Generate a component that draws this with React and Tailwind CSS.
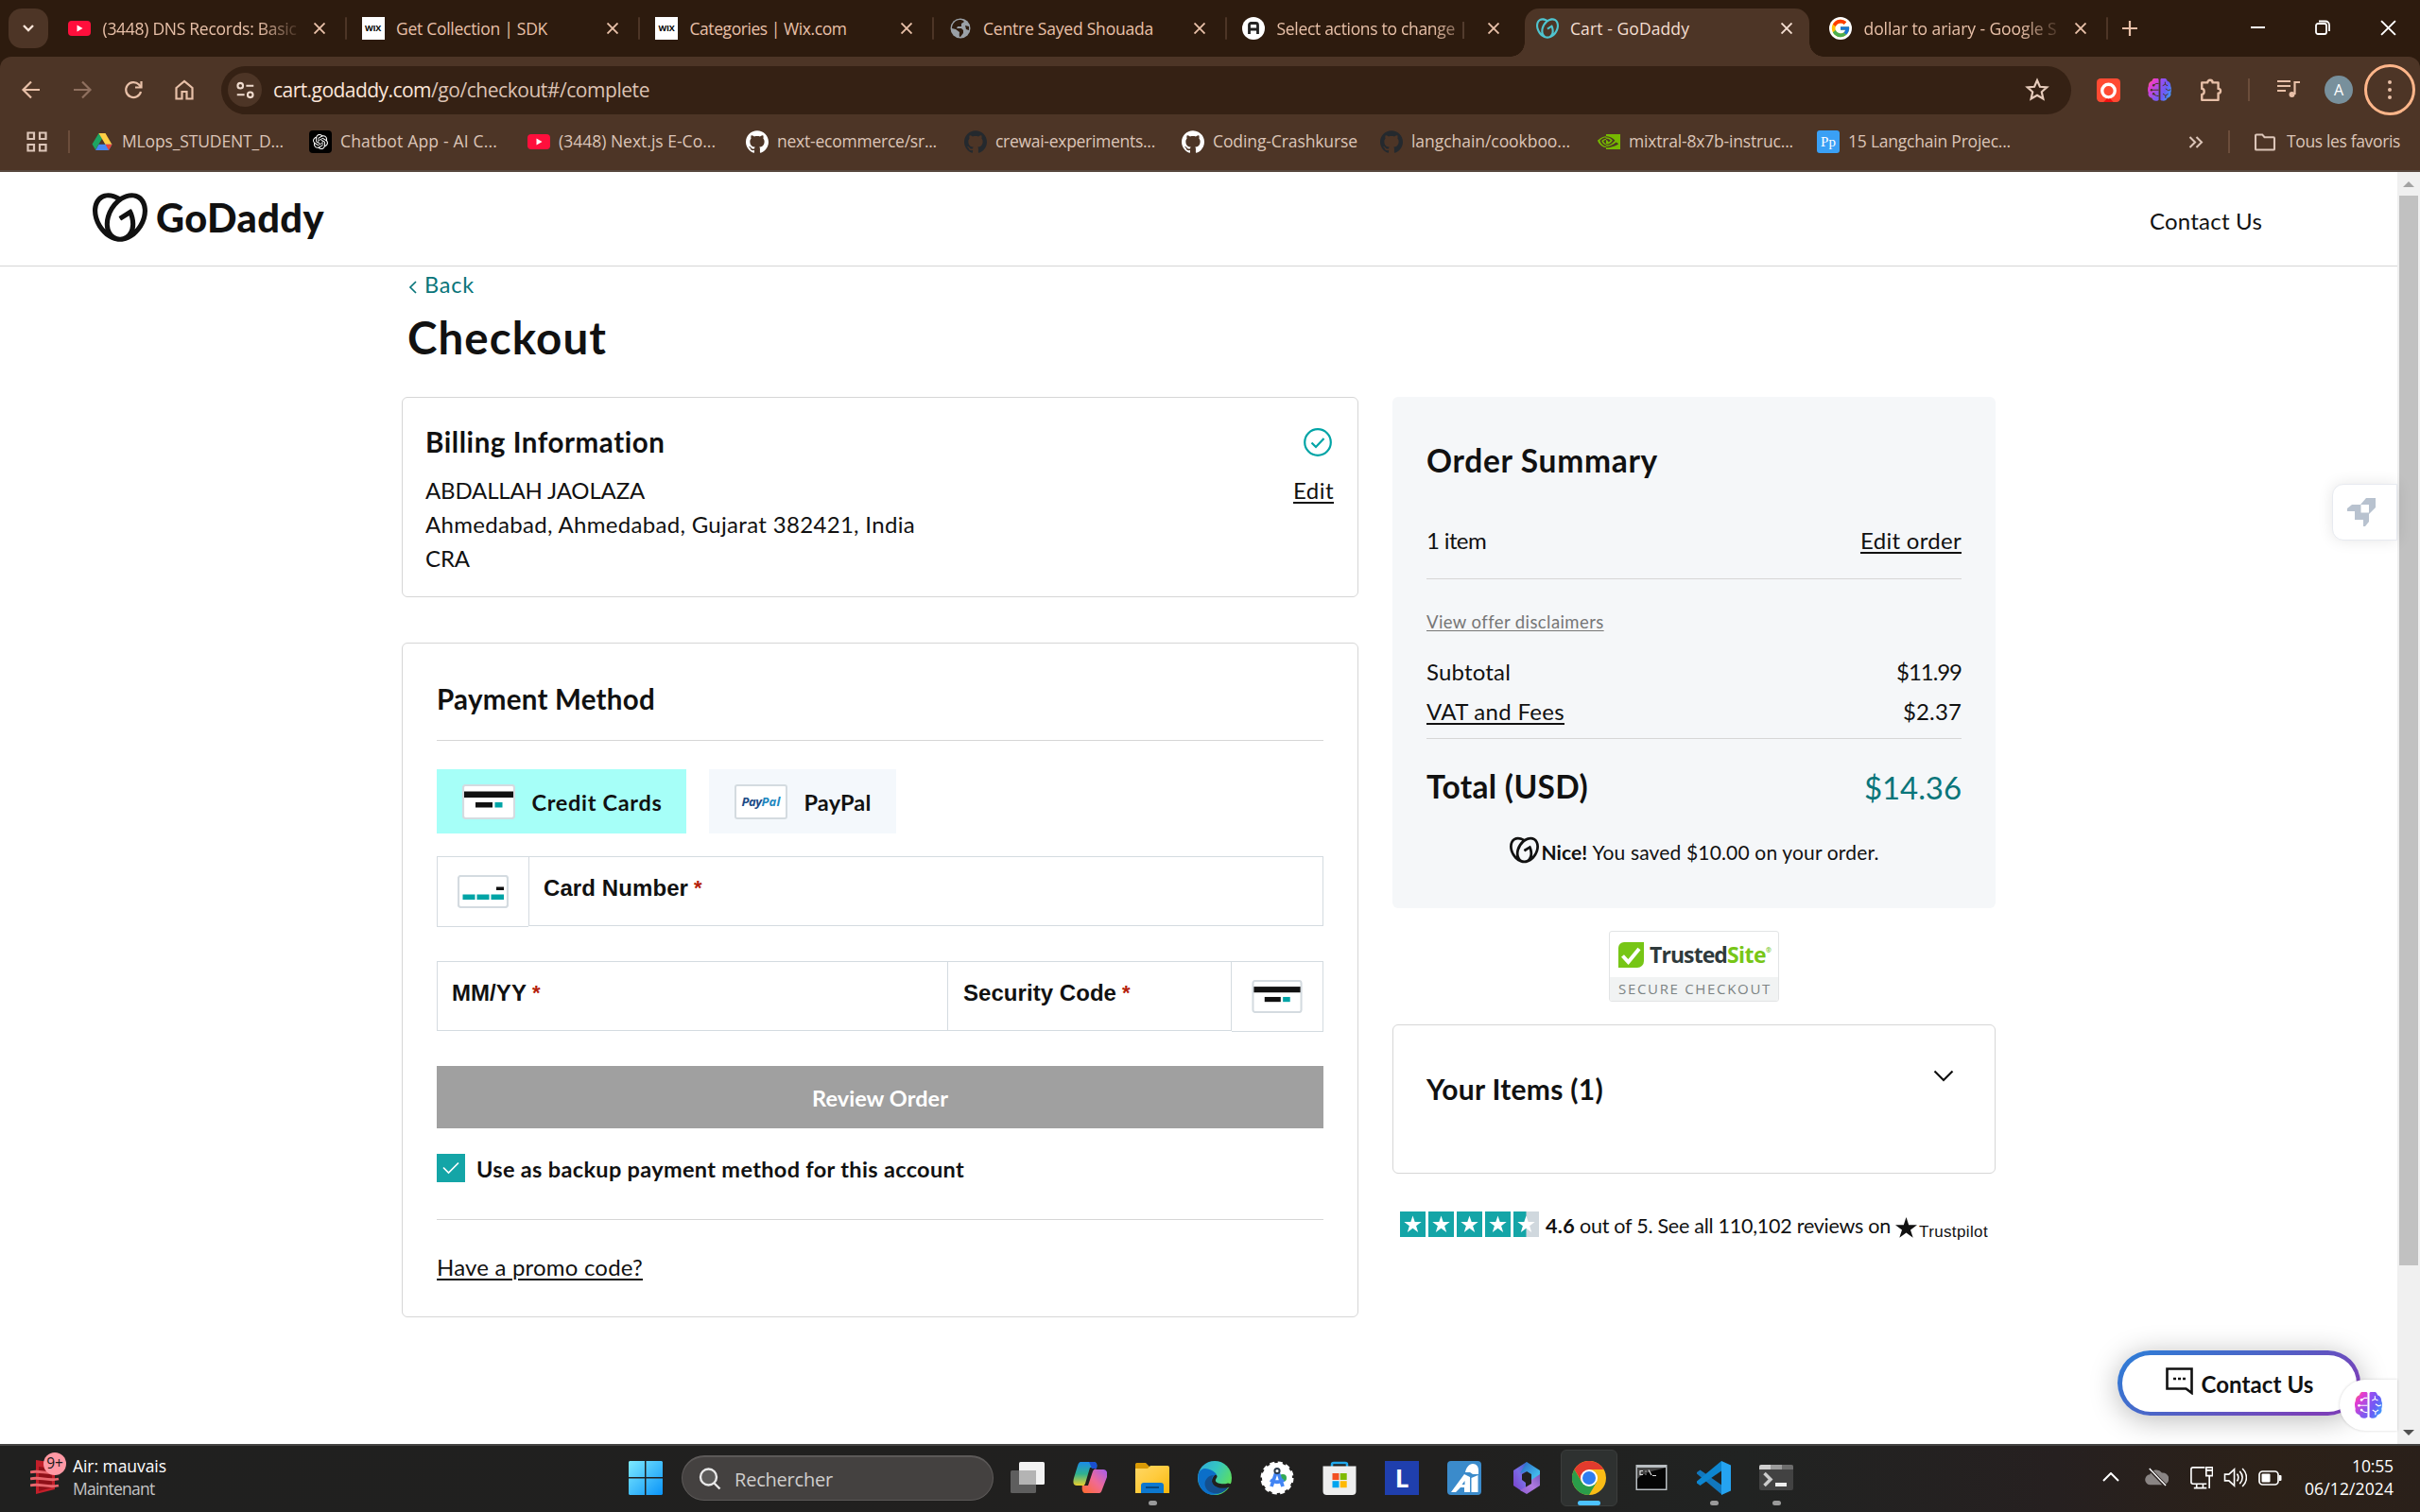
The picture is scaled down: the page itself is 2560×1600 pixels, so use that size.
import React, { useLayoutEffect, useRef, useState } from "react";
import { SiGodaddy, SiGithub, SiNvidia, SiOpenai } from "react-icons/si";
import { FcGoogle } from "react-icons/fc";

// Single line of text whose tracking is adjusted so that it spans `w` pixels.
function Fit({ w, className = "", children }) {
  const ref = useRef(null);
  const [spacing, setSpacing] = useState(0);
  useLayoutEffect(() => {
    const natural = ref.current.getBoundingClientRect().width;
    setSpacing((w - natural) / String(children).length);
  }, []);
  return (
    <span
      ref={ref}
      className={"inline-block shrink-0 whitespace-pre leading-none " + className}
      style={{ letterSpacing: spacing + "px" }}
    >
      {children}
    </span>
  );
}

const UI = "font-['Open_Sans',sans-serif]";

function YouTube() {
  return (
    <svg viewBox="0 0 24 24" className="size-6">
      <rect x="0" y="4" width="24" height="16" rx="4" fill="#ff0f3c" />
      <path d="M9.5 8.5v7l6-3.5z" fill="#fff" />
    </svg>
  );
}

function Wix() {
  return (
    <span className="flex size-6 items-center justify-center bg-white font-['Open_Sans',sans-serif] text-[9px] font-bold tracking-tight text-black">
      WIX
    </span>
  );
}

function Globe() {
  return (
    <svg viewBox="0 0 24 24" className="size-6">
      <circle cx="12" cy="12" r="10.5" fill="#9aa0a6" />
      <path d="M11 3c2 0 4 .5 5 2l-3 2v3H9l-1 2h5l2 2v3l-3 4c-2 0-1-4-1-5l-4-3-4-1c0-5 4-9 8-9z" fill="#2d1b0e" />
      <path d="M17 9l4 1v4l-3-1z" fill="#2d1b0e" />
    </svg>
  );
}

function RoundA() {
  return (
    <svg viewBox="0 0 24 24" className="size-6">
      <circle cx="12" cy="12" r="12" fill="#fff" />
      <path d="M7.5 18V8.5a2 2 0 0 1 2-2h5a2 2 0 0 1 2 2V18M7.5 13h9" stroke="#222" strokeWidth="2.8" fill="none" />
    </svg>
  );
}

function Google() {
  return (
    <span className="flex size-6 items-center justify-center rounded-full bg-white">
      <FcGoogle className="size-[22px]" />
    </span>
  );
}

function Cross({ className = "" }) {
  return (
    <svg viewBox="0 0 12 12" className={"size-3 shrink-0 " + className}>
      <path d="M.5 .5l11 11M11.5 .5L.5 11.5" stroke="currentColor" strokeWidth="1.9" />
    </svg>
  );
}

const TABS = [
  { icon: <YouTube />, text: "(3448) DNS Records: Basic", w: 205, fade: true },
  { icon: <Wix />, text: "Get Collection | SDK", w: 160 },
  { icon: <Wix />, text: "Categories | Wix.com", w: 166 },
  { icon: <Globe />, text: "Centre Sayed Shouada", w: 180 },
  { icon: <RoundA />, text: "Select actions to change |", w: 202, fade: true, last: true },
  { icon: <SiGodaddy className="size-6 text-[#4fc4cf]" />, text: "Cart - GoDaddy", w: 126, active: true },
  { icon: <Google />, text: "dollar to ariary - Google S", w: 204, fade: true },
];

function Tab({ tab }) {
  return (
    <div className="relative flex h-[60px] w-[310.5px] shrink-0 items-center pl-4">
      {tab.active && (
        <div className="absolute top-[9px] bottom-0 left-[4px] w-[301px] rounded-t-[15px] bg-[#4d3526]">
          <div className="absolute bottom-0 -left-[15px] size-[15px] bg-[radial-gradient(circle_at_0_0,#2d1b0e_14.5px,#4d3526_15px)]" />
          <div className="absolute -right-[15px] bottom-0 size-[15px] bg-[radial-gradient(circle_at_100%_0,#2d1b0e_14.5px,#4d3526_15px)]" />
        </div>
      )}
      <div className="relative flex w-full items-center">
        {tab.icon}
        <div
          className={
            "ml-[12.5px] flex w-[212px] items-center overflow-hidden py-1 pt-[6px] text-[17.5px] " +
            (tab.active ? "text-[#f5dfd2] " : "text-[#e8c0a8] ") +
            (tab.fade ? "[mask-image:linear-gradient(to_right,black_78%,transparent_100%)]" : "")
          }
        >
          <Fit w={tab.w} className={UI}>{tab.text}</Fit>
        </div>
        <Cross className={"ml-[11px] " + (tab.active ? "text-[#f5dfd2]" : "text-[#e8c0a8]")} />
        {!tab.active && !tab.last && <div className="ml-auto h-6 w-[2px] rounded bg-[#4d3526]" />}
      </div>
    </div>
  );
}

function Brain({ className = "", line = "#4d3526" }) {
  return (
    <svg viewBox="1.5 1 27 26.5" className={className}>
      <defs>
        <linearGradient id="brainL" x1="0" y1="0" x2=".6" y2="1">
          <stop offset="0" stopColor="#ff9a2e" />
          <stop offset=".35" stopColor="#e63bd0" />
          <stop offset="1" stopColor="#7a5cf0" />
        </linearGradient>
        <linearGradient id="brainR" x1="0" y1="0" x2="1" y2="1">
          <stop offset="0" stopColor="#a64bf0" />
          <stop offset=".5" stopColor="#6a5cf5" />
          <stop offset="1" stopColor="#2fb4ff" />
        </linearGradient>
      </defs>
      <path d="M14 2v24c-2 2-7 2-8-2-3-1-5-3-4-6-1-3-1-6 0-8 0-3 1-5 4-6 1-4 6-5 8-2z" fill="url(#brainL)" />
      <path d="M16 2v24c2 2 7 2 8-2 3-1 5-3 4-6 1-3 1-6 0-8 0-3-1-5-4-6-1-4-6-5-8-2z" fill="url(#brainR)" />
      <path d="M14 7h-3L8 9M5 14.500h9M14 21.500c-3 0-5-1-6-3" stroke={line} strokeWidth="1.1" fill="none" />
      <path d="M18.500 9.500l3-1.500m0-3v3l3 1.500M22 13l3 2 3-1M19 19l3 2v3m0-3l3-2" stroke={line} strokeWidth="1.100" fill="none" />
      <circle cx="8" cy="9" r="1.300" fill={line} />
      <circle cx="5.500" cy="14.500" r="1.300" fill={line} />
      <circle cx="8" cy="19" r="1.300" fill={line} />
    </svg>
  );
}

function Toolbar() {
  return (
    <div className="flex h-[70px] items-center text-[#e8c0a8]">
      <svg viewBox="0 0 24 24" className="ml-[21px] size-6" fill="none" stroke="currentColor" strokeWidth="2.2">
        <path d="M21 12H4M12 3.5L3.5 12l8.500 8.500" />
      </svg>
      <svg viewBox="0 0 24 24" className="ml-[30px] size-6 text-[#8f705f]" fill="none" stroke="currentColor" strokeWidth="2.200">
        <path d="M3 12h17M12 3.500l8.500 8.500-8.500 8.500" />
      </svg>
      <svg viewBox="0 0 24 24" className="ml-[30px] size-6" fill="none" stroke="currentColor" strokeWidth="2.200">
        <path d="M20 14a8 8 0 1 1-2-7.500L20 9" />
        <path d="M20.500 3v6.500H14" />
      </svg>
      <svg viewBox="0 0 24 24" className="ml-[30px] size-6" fill="none" stroke="currentColor" strokeWidth="2.200">
        <path d="M3.500 10L12 3l8.500 7v11.500h-6V14h-5v7.500h-6z" />
      </svg>
      <div className="ml-[27px] flex h-[51px] w-[1957px] items-center rounded-full bg-[#352114] pl-[7px]">
        <div className="flex size-9 items-center justify-center rounded-full bg-[#4d3526] text-[#f0dccf]">
          <svg viewBox="0 0 24 24" className="size-[21px]" fill="none" stroke="currentColor" strokeWidth="2.400">
            <circle cx="6" cy="6.500" r="3.200" />
            <path d="M13 6.500h9M2 17.500h9" />
            <circle cx="18" cy="17.500" r="3.200" />
          </svg>
        </div>
        <div className="ml-3 flex text-[21px] text-[#fbe6da]">
          <Fit w={167} className={UI}>cart.godaddy.com</Fit>
          <Fit w={231} className={UI + " text-[#dcc3b4]"}>/go/checkout#/complete</Fit>
        </div>
        <svg viewBox="0 0 24 24" className="mr-[23px] ml-auto size-[26px] text-[#e6cbbb]" fill="none" stroke="currentColor" strokeWidth="2">
          <path d="M12 2.800l2.700 6.200 6.800.600-5.100 4.500 1.500 6.700L12 17.300l-5.900 3.500 1.500-6.700-5.100-4.500 6.800-.600z" />
        </svg>
      </div>
      <svg viewBox="0 0 24 24" className="ml-[27px] size-[25px]">
        <rect width="24" height="24" rx="4" fill="#ff4b33" />
        <path d="M7 24l5-5 5 5z" fill="#e11" />
        <circle cx="12" cy="12.500" r="6.500" fill="none" stroke="#fff" strokeWidth="3.200" />
      </svg>
      <Brain className="ml-[29px] h-6 w-[25px]" />
      <svg viewBox="0 0 24 24" className="ml-[29px] size-[26px]" fill="none" stroke="currentColor" strokeWidth="2.200" strokeLinejoin="round">
        <path d="M3 5h5.500a2.500 2.500 0 0 1 5 0H19v6a2.200 2.200 0 0 1 0 4.500V22H3v-5.500c3 0 3-5.500 0-5.500z" />
      </svg>
      <div className="ml-[26px] h-6 w-[2px] bg-[#6b4d3b]" />
      <svg viewBox="0 0 24 20" className="ml-[29px] h-5 w-6 -translate-y-px" fill="none" stroke="currentColor" strokeWidth="2.200">
        <path d="M0 2h14M0 7h14M0 12h9M18.500 16V3H24" />
        <circle cx="15.500" cy="16" r="3" fill="currentColor" stroke="none" />
      </svg>
      <div className="ml-[26px] flex size-[30px] items-center justify-center rounded-full bg-[#78909c] font-['Open_Sans',sans-serif] text-[16px] text-white">
        A
      </div>
      <div className="ml-[12px] flex size-[54px] flex-col items-center justify-center gap-1 rounded-full border-[3px] border-[#ffb68a]">
        <i className="size-1 rounded-full bg-[#e8c0a8]" />
        <i className="size-1 rounded-full bg-[#e8c0a8]" />
        <i className="size-1 rounded-full bg-[#e8c0a8]" />
      </div>
    </div>
  );
}

function Drive() {
  return (
    <svg viewBox="0 0 24 24" className="size-6">
      <path d="M8.500 3h7L8.500 14.500 5 20.500 1.500 14.500z" fill="#1da462" />
      <path d="M8.500 3h7l7 12h-7z" fill="#ffcf44" />
      <path d="M8.500 14.800h14L19 21H5z" fill="#4688f4" />
      <path d="M19 21l3.500-6.200h-7z" fill="#ea4335" />
    </svg>
  );
}

const BOOKMARKS = [
  { icon: <Drive />, text: "MLops_STUDENT_D...", w: 171, box: "w-[231px]" },
  {
    icon: (
      <span className="flex size-6 items-center justify-center rounded bg-black text-white">
        <SiOpenai className="size-4" />
      </span>
    ),
    text: "Chatbot App - AI C...",
    w: 166,
    box: "w-[231px]",
  },
  { icon: <YouTube />, text: "(3448) Next.js E-Co...", w: 166, box: "w-[231px]" },
  { icon: <SiGithub className="size-6 text-white" />, text: "next-ecommerce/sr...", w: 169, box: "w-[231px]" },
  { icon: <SiGithub className="size-6 text-[#24292e]" />, text: "crewai-experiments...", w: 169, box: "w-[230px]" },
  { icon: <SiGithub className="size-6 text-white" />, text: "Coding-Crashkurse", w: 153, box: "w-[210px]" },
  { icon: <SiGithub className="size-6 text-[#24292e]" />, text: "langchain/cookboo...", w: 168, box: "w-[230px]" },
  { icon: <SiNvidia className="size-6 text-[#76b900]" />, text: "mixtral-8x7b-instruc...", w: 174, box: "w-[232px]" },
  {
    icon: (
      <span className="flex size-6 items-center justify-center rounded-[3px] bg-[#3aa0f5] font-['Liberation_Serif',serif] text-[15px] text-white">
        Pp
      </span>
    ),
    text: "15 Langchain Projec...",
    w: 172,
    box: "w-[230px]",
  },
];

function Bookmarks() {
  return (
    <div className="flex h-[52px] items-center pb-[12px] text-[#dcc5b8]">
      <svg viewBox="0 0 22 22" className="ml-[28px] size-[22px]" fill="none" stroke="currentColor" strokeWidth="2.200">
        <path d="M1.500 1.500h6.500v6.500H1.500zM14 1.500h6.500v6.500H14zM1.500 14h6.500v6.500H1.500zM14 14h6.500v6.500H14z" />
      </svg>
      <div className="ml-[22px] h-6 w-[2px] bg-[#6b4d3b]" />
      <div className="ml-[22px] flex">
        {BOOKMARKS.map((b) => (
          <div key={b.text} className={"flex items-center text-[17.5px] " + b.box}>
            {b.icon}
            <Fit w={b.w} className={UI + " ml-[9px]"}>{b.text}</Fit>
          </div>
        ))}
      </div>
      <svg viewBox="0 0 16 14" className="mr-[26px] ml-auto h-[13px] w-4" fill="none" stroke="currentColor" strokeWidth="2.200">
        <path d="M1 1l6 6-6 6M8.500 1l6 6-6 6" />
      </svg>
      <div className="h-6 w-[2px] bg-[#6b4d3b]" />
      <svg viewBox="0 0 24 20" className="ml-[25px] h-[19px] w-6" fill="none" stroke="currentColor" strokeWidth="2.200">
        <path d="M1.500 2.500a1 1 0 0 1 1-1H9l2.500 3h10a1 1 0 0 1 1 1v12a1 1 0 0 1-1 1h-19a1 1 0 0 1-1-1z" />
      </svg>
      <Fit w={120} className={UI + " mr-[21px] ml-[11px] text-[17.5px]"}>Tous les favoris</Fit>
    </div>
  );
}

function Browser() {
  return (
    <div className="h-[182px] bg-[#2d1b0e]">
      <div className="flex h-[60px]">
        <div className="mt-[9px] ml-[9px] flex h-[42px] w-[42px] shrink-0 items-center justify-center rounded-[14px] bg-[#4d3526]">
          <svg viewBox="0 0 12 8" className="h-2 w-3" fill="none" stroke="#fbe6da" strokeWidth="2.400">
            <path d="M1 1l5 5 5-5" />
          </svg>
        </div>
        <div className="ml-[5px] flex">
          {TABS.map((t) => (
            <Tab key={t.text} tab={t} />
          ))}
        </div>
        <svg viewBox="0 0 16 16" className="mt-[22px] ml-[15px] size-4 shrink-0" stroke="#e8c0a8" strokeWidth="2.200">
          <path d="M8 0v16M0 8h16" />
        </svg>
        <div className="mt-[20px] mr-[25px] ml-auto flex h-[18px] items-center text-white">
          <div className="h-[2px] w-[15px] bg-white" />
          <svg viewBox="0 0 16 16" className="ml-[53px] size-4" fill="none" stroke="#fff" strokeWidth="1.800">
            <rect x="1" y="4" width="11" height="11" rx="2" />
            <path d="M4 1.500h7a4 4 0 0 1 4 4V12" />
          </svg>
          <svg viewBox="0 0 16 16" className="ml-[53px] size-[17px]" stroke="#fff" strokeWidth="1.800">
            <path d="M1 1l14 14M15 1L1 15" />
          </svg>
        </div>
      </div>
      <div className="h-[122px] rounded-t-[12px] border-b-2 border-[#57483f] bg-[#4d3526]">
        <Toolbar />
        <Bookmarks />
      </div>
    </div>
  );
}

function CardBack({ className = "" }) {
  return (
    <svg viewBox="0 0 56 37" className={className}>
      <rect x="1" y="1" width="54" height="35" rx="2.500" fill="#fff" stroke="#d4dbe0" strokeWidth="2.200" />
      <rect x="2" y="7.500" width="52" height="6.500" fill="#111" />
      <rect x="14" y="19" width="18" height="5.500" fill="#111" />
      <rect x="34.500" y="19" width="8" height="5.500" fill="#00a4a6" />
    </svg>
  );
}

function Required() {
  return <span className="ml-[6px] text-[22px] leading-none font-bold text-[#b5200c]">*</span>;
}

function Left() {
  return (
    <div className="w-[1012px]">
      <section className="h-[212px] rounded-md border border-[#d6d6d6] pt-[14px] pr-[25px] pl-[24px]">
        <div className="flex h-[65px] items-center justify-between">
          <Fit w={254} className="text-[29.5px] font-bold">Billing Information</Fit>
          <svg viewBox="0 0 30 30" className="mr-[2px] size-[30px]" fill="none" stroke="#00a4a6" strokeWidth="2.200">
            <circle cx="15" cy="15" r="13.800" />
            <path d="M8.500 15.500l4.500 4.500 8.500-9" />
          </svg>
        </div>
        <div className="mt-px flex h-9 items-center justify-between text-[24px]">
          <Fit w={232}>ABDALLAH JAOLAZA</Fit>
          <Fit w={43} className="underline decoration-[1.5px] underline-offset-[3px]">Edit</Fit>
        </div>
        <div className="flex h-9 items-center text-[24px]">
          <Fit w={518}>Ahmedabad, Ahmedabad, Gujarat 382421, India</Fit>
        </div>
        <div className="flex h-9 items-center text-[24px]">
          <Fit w={47}>CRA</Fit>
        </div>
      </section>

      <section className="mt-[48px] h-[714px] rounded-md border border-[#d6d6d6] px-[36px]">
        <div className="flex h-[103px] items-center border-b border-[#d6d6d6] pt-[15px]">
          <Fit w={231} className="text-[29.5px] font-bold">Payment Method</Fit>
        </div>
        <div className="mt-[30px] flex h-[68px] gap-6">
          <div className="flex w-[264px] items-center bg-[#a6fff8] pl-[27px]">
            <CardBack className="h-[37px] w-14" />
            <Fit w={138} className="mt-[3px] ml-[17.5px] text-[23.5px] font-bold">Credit Cards</Fit>
          </div>
          <div className="flex w-[198px] items-center bg-[#f4f8fc] pl-[27px]">
            <div className="flex h-[37px] w-14 items-center justify-center rounded-[3px] border-2 border-[#d4dbe0] bg-white text-[13px]">
              <Fit w={21} className="font-['Open_Sans',sans-serif] font-bold text-[#1d4b86] italic">Pay</Fit>
              <Fit w={20} className="font-['Open_Sans',sans-serif] font-bold text-[#2087bf] italic">Pal</Fit>
            </div>
            <Fit w={71} className="mt-[3px] ml-[17.5px] text-[23.5px] font-bold">PayPal</Fit>
          </div>
        </div>
        <div className="mt-[24px] flex items-start">
          <div className="flex h-[75px] w-[97px] items-center justify-center border border-r-0 border-[#d4dbe0]">
            <svg viewBox="0 0 54 35" className="h-[35px] w-[54px]">
              <rect x="1" y="1" width="52" height="33" rx="2.500" fill="#fff" stroke="#d4dbe0" strokeWidth="2.200" />
              <rect x="41" y="12.500" width="8" height="3.500" fill="#111" />
              <path d="M5.500 20.500h13v5.500h-13zM20.500 20.500h13v5.500h-13zM35.500 20.500h13.500v5.500H35.500z" fill="#00a4a6" />
            </svg>
          </div>
          <div className="h-[74px] w-[841px] border border-[#d4dbe0] pl-[15px]">
            <div className="flex h-[65px] items-center font-['Liberation_Sans',sans-serif] text-[24px] font-bold">
              <Fit w={153}>Card Number</Fit>
              <Required />
            </div>
          </div>
        </div>
        <div className="mt-[36px] flex items-start">
          <div className="h-[74px] w-[541px] border border-[#d4dbe0] pl-[15px]">
            <div className="flex h-[65px] items-center font-['Liberation_Sans',sans-serif] text-[24px] font-bold">
              <Fit w={79}>MM/YY</Fit>
              <Required />
            </div>
          </div>
          <div className="h-[74px] w-[300px] border border-l-0 border-[#d4dbe0] pl-[16px]">
            <div className="flex h-[65px] items-center font-['Liberation_Sans',sans-serif] text-[24px] font-bold">
              <Fit w={162}>Security Code</Fit>
              <Required />
            </div>
          </div>
          <div className="flex h-[75px] w-[97px] items-center justify-center border border-l-0 border-[#d4dbe0]">
            <CardBack className="h-[35px] w-[54px]" />
          </div>
        </div>
        <div className="mt-[36px] flex h-[66px] items-center justify-center bg-[#a0a0a0] pt-[3px] text-[23.5px] text-white">
          <Fit w={144} className="font-bold">Review Order</Fit>
        </div>
        <div className="mt-[27px] flex h-[30px] items-center">
          <div className="flex size-[30px] items-center justify-center bg-[#14a5a7]">
            <svg viewBox="0 0 18 14" className="h-[14px] w-[18px]" fill="none" stroke="#fff" strokeWidth="1.700">
              <path d="M1 6.500L6.500 12 17 1.500" />
            </svg>
          </div>
          <Fit w={516} className="mt-[3px] ml-3 text-[23.5px] font-bold">Use as backup payment method for this account</Fit>
        </div>
        <div className="mt-[39px] flex h-[101px] items-center border-t border-[#d6d6d6] text-[24px]">
          <Fit w={218} className="underline decoration-[1.5px] underline-offset-[3px]">Have a promo code?</Fit>
        </div>
      </section>
    </div>
  );
}

function Right() {
  return (
    <div className="w-[638px]">
      <section className="h-[541px] rounded-md bg-[#f5f7f9] px-[36px] pt-[39px] text-[24px]">
        <div className="flex h-[57px] items-center">
          <Fit w={245} className="text-[33.5px] font-bold">Order Summary</Fit>
        </div>
        <div className="mt-[16px] flex h-[81px] items-center justify-between border-b border-[#d6d6d6]">
          <Fit w={63}>1 item</Fit>
          <Fit w={107} className="underline decoration-[1.5px] underline-offset-[3px]">Edit order</Fit>
        </div>
        <div className="mt-[26px] flex h-[39px] items-center">
          <Fit w={187} className="text-[18.500px] text-[#767676] underline decoration-1 underline-offset-2">View offer disclaimers</Fit>
        </div>
        <div className="mt-[12px] flex h-[42px] items-center justify-between">
          <Fit w={89}>Subtotal</Fit>
          <Fit w={69}>$11.99</Fit>
        </div>
        <div className="flex h-[42px] items-center justify-between">
          <Fit w={146} className="underline decoration-[1.5px] underline-offset-[3px]">VAT and Fees</Fit>
          <Fit w={62}>$2.37</Fit>
        </div>
        <div className="mt-[7px] flex h-[103px] items-center justify-between border-t border-[#d6d6d6]">
          <Fit w={171} className="text-[33.5px] font-bold">Total (USD)</Fit>
          <Fit w={103} className="text-[33px] text-[#09757a]">$14.36</Fit>
        </div>
        <div className="flex h-[34px] items-center justify-center text-[21px]">
          <SiGodaddy className="size-[31px] -translate-y-[2px]" />
          <Fit w={54} className="ml-[3px] font-bold">Nice! </Fit>
          <Fit w={303}>You saved $10.00 on your order.</Fit>
        </div>
      </section>

      <div className="mx-auto mt-[24px] h-[75px] w-[180px] overflow-hidden rounded-[3px] border border-[#e2e4e5] bg-white">
        <div className="flex h-[48px] items-center pl-[9px] font-['Open_Sans',sans-serif] text-[23px] font-bold">
          <svg viewBox="0 0 27 27" className="size-[27px]">
            <path d="M6 0h21v20a7 7 0 0 1-7 7H0V6a6 6 0 0 1 6-6z" fill="#77c616" />
            <path d="M4.500 14.500l6 6.500L22 7" stroke="#fff" strokeWidth="4" fill="none" />
          </svg>
          <Fit w={82} className="ml-[6px] text-[#2f3a3c]">Trusted</Fit>
          <Fit w={41} className="text-[#77c616]">Site</Fit>
          <span className="mb-[10px] text-[7px] leading-none text-[#77c616]">®</span>
        </div>
        <div className="flex h-[26px] items-center bg-[#f1f3f3] pb-[2px] pl-[9px] text-[#7c8384]">
          <Fit w={162} className="font-['Open_Sans',sans-serif] text-[15px] font-medium">SECURE CHECKOUT</Fit>
        </div>
      </div>

      <section className="mt-[24px] flex h-[158px] items-start justify-between rounded-md border border-[#d6d6d6] pr-[43px] pl-[35px]">
        <div className="flex h-[133px] items-center">
          <Fit w={187} className="text-[30px] font-bold">Your Items (1)</Fit>
        </div>
        <svg viewBox="0 0 22 13" className="mt-[47px] h-[13px] w-[22px]" fill="none" stroke="#111" strokeWidth="2.200">
          <path d="M1.500 1.500L11 11l9.500-9.500" />
        </svg>
      </section>

      <div className="mt-[40px] flex h-[27px] items-center pl-[8px] text-[21.5px]">
        <div className="flex gap-[3px]">
          {[1, 1, 1, 1, 0.5].map((v, i) => (
            <svg key={i} viewBox="0 0 27 27" className="size-[27px]">
              <rect width="27" height="27" fill="#d0d8de" />
              <rect width={27 * v} height="27" fill="#14a5a7" />
              <path d="M13.500 4.500l2.200 6.500h7l-5.600 4.200 2.100 6.800-5.700-4.200L7.800 22l2.100-6.800L4.300 11h7z" fill="#fff" />
            </svg>
          ))}
        </div>
        <Fit w={31} className="mt-[5px] ml-[7px] font-bold">4.6</Fit>
        <Fit w={329} className="mt-[5px] ml-[5px]">out of 5. See all 110,102 reviews on</Fit>
        <svg viewBox="0 0 23 22" className="mt-[7px] ml-[5px] h-[22px] w-[23px]">
          <path d="M11.500 0l2.700 8.200H23l-7 5.200 2.700 8.300-7.200-5.100-7.200 5.100L7 13.400 0 8.200h8.800z" fill="#111" />
        </svg>
        <Fit w={73} className="mt-[15px] ml-[2px] font-['Liberation_Sans',sans-serif] text-[17px]">Trustpilot</Fit>
      </div>
    </div>
  );
}

function Page() {
  return (
    <div className="relative flex h-[1346px] bg-white font-['Lato',sans-serif] text-[#111]">
      <div className="w-[2536px]">
        <header className="flex h-[100px] items-center border-b border-[#d6d6d6] pl-[98px]">
          <SiGodaddy className="-mt-[3px] size-[58px]" />
          <Fit w={178} className="-mt-[2px] ml-[9px] text-[41.5px] font-black">GoDaddy</Fit>
          <Fit w={119} className="mt-[5px] mr-[143px] ml-auto text-[24px]">Contact Us</Fit>
        </header>
        <div className="ml-[425px] w-[1686px]">
          <div className="flex h-[39px] items-center pl-[7px] text-[#09757a]">
            <svg viewBox="0 0 9 14" className="mt-[5px] h-[14px] w-[9px]" fill="none" stroke="currentColor" strokeWidth="1.700">
              <path d="M8 1L2 7l6 6" />
            </svg>
            <Fit w={53} className="ml-[8px] text-[23.5px]">Back</Fit>
          </div>
          <h1 className="flex h-[71px] items-center pl-[6px]">
            <Fit w={211} className="text-[47.5px] font-bold">Checkout</Fit>
          </h1>
          <div className="mt-[28px] flex items-start gap-[36px]">
            <Left />
            <Right />
          </div>
        </div>
      </div>
      <div className="flex w-6 flex-col items-center bg-[#f0f0f0]">
        <svg viewBox="0 0 12 6" className="mt-[10px] h-[6px] w-3">
          <path d="M6 0l6 6H0z" fill="#a3a3a3" />
        </svg>
        <div className="mt-[9px] h-[1132px] w-5 bg-[#c1c1c1]" />
        <svg viewBox="0 0 12 6" className="mt-auto mb-[9px] h-[6px] w-3">
          <path d="M6 6l6-6H0z" fill="#505050" />
        </svg>
      </div>

      <div className="absolute top-[330px] right-[24px] flex h-[60px] w-[69px] items-center rounded-l-[12px] border border-[#e7eaf0] bg-white pl-[15px] shadow-[0_0_16px_rgba(0,0,0,0.1)]">
        <svg viewBox="0 0 30 30" className="size-[30px]">
          <path d="M5 7h9l6-7h10v10l-7 7v8l-4 5h-2v-7H8v-9H0V11z" fill="#b8c2cf" />
          <rect x="14.500" y="7" width="8.500" height="8.500" fill="#fff" />
        </svg>
      </div>

      <div className="absolute top-[1247px] right-[63px] h-[69px] w-[257px] rounded-full bg-[linear-gradient(150deg,#2c7fd8,#4a66c8_40%,#7b3fb8_85%)] p-[4.5px] shadow-[0_4px_30px_rgba(0,0,0,0.28)]">
        <div className="flex h-full items-center rounded-full bg-white pl-[46px]">
          <svg viewBox="0 0 29 29" className="-mt-[4px] h-[29px] w-[29px]" fill="none" stroke="#111" strokeWidth="2.600">
            <path d="M1.500 1.500h26v25.500l-6-4.500h-20z" />
            <path d="M8 12h3M13 12h3M18 12h3" />
          </svg>
          <Fit w={119} className="mt-[2px] ml-[9px] text-[24px] font-bold">Contact Us</Fit>
        </div>
      </div>
      <div className="absolute top-[1278px] right-[24px] flex h-[54px] w-[61px] items-center rounded-l-full bg-white pl-[15px] shadow-[0_0_3px_rgba(0,0,0,0.18)]">
        <Brain className="h-[28px] w-[31px]" line="#fff" />
      </div>
    </div>
  );
}

const APPS = [
  {
    id: "taskview",
    art: (
      <g>
        <rect x="0" y="10" width="27" height="24" rx="1.500" fill="#5e5e5e" />
        <rect x="9" y="1" width="27" height="24" rx="1.500" fill="#f2f2f2" />
        <path d="M9 10h18v15H9z" fill="#b4b4b4" />
      </g>
    ),
  },
  {
    id: "copilot",
    art: (
      <g>
        <path d="M8 1h14c3 0 4 3 3 6h-7l-5 17c-1 2-2 3-4 2H4c-4 0-4-4-3-8L5 5c1-3 2-4 3-4z" fill="url(#copA)" />
        <path d="M28 34H13c-3 0-4-4-3-8h6l5-15c1-2 2-3 4-2h7c4 0 5 4 4 8l-5 13c-1 3-2 4-3 4z" fill="url(#copB)" />
        <path d="M17 1h5c3 0 4 3 3 7h-5z" fill="#1a4fd0" />
      </g>
    ),
  },
  {
    id: "explorer",
    dot: true,
    art: (
      <g>
        <path d="M0 3.500C0 2.500 1 2 2 2h9l4 4v6H0z" fill="#d99a06" />
        <path d="M0 8h13l3-3h18a2 2 0 0 1 2 2v27H0z" fill="url(#fold)" />
        <path d="M6 34V26a3 3 0 0 1 3-3h18a3 3 0 0 1 3 3v8z" fill="#0d78cf" />
        <rect x="11" y="27" width="14" height="2" fill="#09477e" />
      </g>
    ),
  },
  {
    id: "edge",
    art: (
      <g>
        <circle cx="18" cy="18" r="18" fill="url(#edgeA)" />
        <path d="M1 13C4 5 14 8 19 13c3 4-3 6-2 10 2 5 10 6 16 3-5 9-16 12-24 8C2 30-1 21 1 13z" fill="#0b6fc9" />
        <path d="M17 15c-3 2-3 8 0 11s9 4 14 1c1 0 2 0 1 1-6 9-21 8-24-1-2-6 3-12 9-12z" fill="#14508f" />
        <path d="M19 14.500c4 2-1 4 0 7 1 2 7 4 13 2l4 1-2 3c-8 3-18 1-19-6 0-3 2-6 4-7z" fill="#202020" />
      </g>
    ),
  },
  {
    id: "studio",
    art: (
      <g>
        <circle cx="18" cy="18" r="16" fill="#fff" />
        <circle cx="18" cy="18" r="16" fill="none" stroke="#fff" strokeWidth="3" strokeDasharray="5 3.400" />
        <circle cx="24" cy="18" r="4" fill="#34a853" />
        <path d="M18 9l-6 18M18 9l6 18M11 20c4 3 10 3 14 0" stroke="#4285f4" strokeWidth="3.800" fill="none" />
        <circle cx="18" cy="10.500" r="2.600" fill="#fff" stroke="#2b3a4a" strokeWidth="2" />
      </g>
    ),
  },
  {
    id: "store",
    art: (
      <g>
        <path d="M10 8V3.500C10 2.500 11 2 12 2h12c1 0 2 .500 2 1.500V8" fill="none" stroke="#1fa8ec" strokeWidth="2.500" />
        <path d="M.500 5.500h35V32a4 4 0 0 1-4 4h-27a4 4 0 0 1-4-4z" fill="#eeeeee" />
        <path d="M10.500 13h7v7h-7z" fill="#f25022" />
        <path d="M18.700 13h7v7h-7z" fill="#7fba00" />
        <path d="M10.500 21.200h7v7h-7z" fill="#00a4ef" />
        <path d="M18.700 21.200h7v7h-7z" fill="#ffb900" />
      </g>
    ),
  },
  { id: "ledger", letter: "L" },
  {
    id: "ai",
    art: (
      <g>
        <rect width="36" height="36" rx="4" fill="#3b8bcb" />
        <path d="M19 12c1-5 4-9 8-9s6 3 6 7v4h-6l-3-2z" fill="#fff" />
        <path d="M18 14l6 3v16h-6v-5h-4l-5 5H4z" fill="#fff" />
        <path d="M25.500 18l7-3v18h-7z" fill="#fff" />
        <path d="M15.500 25l3-4v4z" fill="#3b8bcb" />
      </g>
    ),
  },
  {
    id: "office",
    art: (
      <g>
        <path d="M18 1L4 10v16l9 6 4-3v-6l-4-3v-6l7-4z" fill="url(#offA)" />
        <path d="M18 1l14 9v14l-9-2v-8l-5-3-7 2z" fill="url(#offC)" />
        <path d="M11 31l7-4 5-3v-4l9-6v12l-14 9z" fill="url(#offB)" />
      </g>
    ),
  },
  {
    id: "chrome",
    active: true,
    art: (
      <g>
        <circle cx="18" cy="18" r="18" fill="#f9bc15" />
        <path d="M18 9h15.600A18 18 0 0 0 2.400 9l8 13z" fill="#e33b2e" />
        <path d="M2.400 9A18 18 0 0 0 18 36l8-13.500-15.600 0z" fill="#2a9d4a" />
        <circle cx="18" cy="18" r="9" fill="#fff" />
        <circle cx="18" cy="18" r="7" fill="#2f7df0" />
      </g>
    ),
  },
  {
    id: "cmd",
    art: (
      <g>
        <rect x="1.500" y="4" width="33" height="27" fill="#b9bec2" />
        <rect x="3" y="7" width="30" height="22.500" fill="#050505" />
        <path d="M3 7h30c-8 3-23 4-30 12z" fill="#444" />
        <path d="M9 10.500H6v4h3M12 10.500v1M12 13.500v1M15 9.500l3 5.500M19 15.500h4" stroke="#ddd" strokeWidth="1.200" fill="none" />
      </g>
    ),
  },
  {
    id: "vscode",
    dot: true,
    art: (
      <g>
        <path d="M0 12l3.500-2.500L27 26v10L0 13.500z" fill="#1177bd" />
        <path d="M26 0v10.500L3.500 26 0 23.500v-2z" fill="#0d86d0" />
        <path d="M26 0l10 4.500v27L26 36z" fill="#25a3f0" />
      </g>
    ),
  },
  {
    id: "terminal",
    dot: true,
    art: (
      <g>
        <rect y="4" width="36" height="27" rx="2" fill="#424242" />
        <path d="M2 4h10v5H0V6a2 2 0 0 1 2-2z" fill="#cfcfcf" />
        <path d="M12 4h12v5H12z" fill="#9b9b9b" />
        <path d="M24 4h10a2 2 0 0 1 2 2v3H24z" fill="#6c6c6c" />
        <path d="M5.500 13l6.500 6.500L5.500 26" stroke="#ccc" strokeWidth="3.500" fill="none" />
        <rect x="17" y="23" width="12" height="4" fill="#eee" />
      </g>
    ),
  },
];

function Gradients() {
  const defs = [
    ["copA", "0", "0", "0", "1", "#1b8ae8", "#2fb28f", "#f0d02a"],
    ["copB", "1", "0", "0", "1", "#a35cf0", "#f06a94", "#ff6a2b"],
    ["fold", "0", "0", "1", "1", "#ffd866", "#ffcb3d", "#f8b60c"],
    ["edgeA", "0", "0", "1", ".6", "#2fa8dc", "#35c6c0", "#5fe05a"],
    ["offA", "0", "1", "1", "0", "#7a3fc8", "#7b6be6", "#2a66c8"],
    ["offB", "0", "1", "1", "0", "#8a5bd0", "#b07ae0", "#7a58c0"],
    ["offC", "0", "0", "1", "1", "#2763c0", "#3a9fe0", "#48d8f8"],
  ];
  return (
    <defs>
      {defs.map(([id, x1, y1, x2, y2, a, b, c]) => (
        <linearGradient key={id} id={id} x1={x1} y1={y1} x2={x2} y2={y2}>
          <stop offset="0" stopColor={a} />
          <stop offset=".5" stopColor={b} />
          <stop offset="1" stopColor={c} />
        </linearGradient>
      ))}
    </defs>
  );
}

function Taskbar() {
  return (
    <div className="flex h-[72px] border-t-2 border-[#454443] bg-[linear-gradient(to_right,#20201f,#21201f_60%,#212322_72%,#262020_85%,#2c2118_94%,#2a201a)] font-['Open_Sans',sans-serif] text-white">
      <div className="flex w-[665px] pl-[32px]">
        <svg viewBox="0 0 38 46" className="mt-[6px] h-[46px] w-[38px]">
          <path d="M6 9l20 3v28L6 45z" fill="#c21f2a" />
          <path d="M9 16l14 2v20l-14 4z" fill="#8f1018" />
          <path d="M0 22c10-3 18 3 30 0M0 29c10-3 18 3 30 0M0 36c10-3 18 3 30 0" stroke="#e8656c" strokeWidth="2.800" fill="none" />
          <circle cx="26" cy="13" r="12" fill="#ff98a4" />
          <text x="26" y="18" textAnchor="middle" fontSize="15.500" fill="#1a1a1a" fontFamily="Open Sans">9+</text>
        </svg>
        <div className="mt-[13px] ml-[7px] flex flex-col gap-[6.5px] text-[17.5px]">
          <Fit w={99}>Air: mauvais</Fit>
          <Fit w={92} className="text-[#c4c4c4]">Maintenant</Fit>
        </div>
      </div>
      <svg viewBox="0 0 36 36" className="mt-[16px] size-9">
        <defs>
          <linearGradient id="win" x1="0" y1="0" x2="1" y2="1">
            <stop offset="0" stopColor="#7deaff" />
            <stop offset="1" stopColor="#0a94f8" />
          </linearGradient>
        </defs>
        <path d="M1 0h16v17H0V1zM18.500 0H35l1 1v16H18.500zM0 18.500h17V36H1l-1-1zM18.500 18.500H36V35l-1 1H18.500z" fill="url(#win)" />
      </svg>
      <div className="mt-[10px] ml-[20px] flex h-[48px] w-[330px] items-center rounded-full border border-t-2 border-[#5c5958] bg-[#444140] pl-[17px]">
        <svg viewBox="0 0 24 24" className="size-6" fill="none" stroke="#e8e8e8" strokeWidth="2.400">
          <circle cx="10.500" cy="10" r="8.500" fill="#5c5b5a" />
          <path d="M16.500 16.500l6 6" />
        </svg>
        <Fit w={104} className="mt-[2px] ml-[14px] text-[20px] text-[#cfcdcc]">Rechercher</Fit>
      </div>
      <div className="ml-[3px] flex">
        {APPS.map((a) => (
          <div key={a.id} className="flex w-[66px] justify-center pt-[4px]">
            <div className={"flex h-[60px] w-[60px] flex-col items-center pt-[12px] " + (a.active ? "rounded-md border border-[#3b3d3c] bg-[#2e3130] !pt-[11px]" : "")}>
              {a.letter ? (
                <span className="flex size-9 items-center justify-center bg-[#1f3fae] text-[26px] leading-none font-bold text-white">{a.letter}</span>
              ) : (
                <svg viewBox="0 0 36 36" className="size-9">
                  <Gradients />
                  {a.art}
                </svg>
              )}
              {a.dot && <i className="mt-[6px] h-[5px] w-[9px] rounded-full bg-[#9a9a9a]" />}
              {a.active && <i className="mt-[6px] h-[5px] w-[24px] rounded-full bg-[#4cc2ff]" />}
            </div>
          </div>
        ))}
      </div>
      <div className="ml-auto flex pt-[20px]">
        <svg viewBox="0 0 18 10" className="mt-[8px] h-[10px] w-[18px]" fill="none" stroke="#fff" strokeWidth="2">
          <path d="M1 9l8-8 8 8" />
        </svg>
        <svg viewBox="0 0 26 22" className="mt-[3px] ml-[27px] h-[20px] w-[25px]">
          <path d="M6 20a6 6 0 0 1-1-12 8 8 0 0 1 14-2 7 7 0 0 1 2 14z" fill="#8a8584" />
          <path d="M4 1l19 20" stroke="#2a2220" strokeWidth="4" />
          <path d="M4.500 1l19 20" stroke="#fff" strokeWidth="1.500" />
        </svg>
        <svg viewBox="0 0 26 26" className="mt-[1px] ml-[22px] size-[25px]" fill="none" stroke="#fff" strokeWidth="1.700">
          <path d="M17 2H4a2 2 0 0 0-2 2v14a2 2 0 0 0 2 2h15M8 20v4M15 20v4M5 24.500h14M18.500 2h7v9h-7zM18.500 5h7M22 11v14" />
        </svg>
        <svg viewBox="0 0 26 22" className="mt-[3px] ml-[11px] h-[21px] w-[25px]" fill="none" stroke="#fff" strokeWidth="1.700">
          <path d="M1.500 7.500H6l6-5.500v18l-6-5.500H1.500zM15 7c2 2 2 6 0 8M18 4c4 4 4 10 0 14M21 1c6 6 6 14 0 20" />
        </svg>
        <svg viewBox="0 0 25 16" className="mt-[6px] ml-[12px] h-4 w-[25px]">
          <rect x="1" y="1" width="20" height="14" rx="3.500" fill="none" stroke="#fff" strokeWidth="1.700" />
          <rect x="3.500" y="3.500" width="9" height="9" rx="1" fill="#fff" />
          <path d="M22 5h1.500a1 1 0 0 1 1 1v4a1 1 0 0 1-1 1H22z" fill="#fff" />
        </svg>
        <div className="-mt-[7px] mr-[28px] ml-[24px] flex flex-col items-end gap-[6.5px] text-[17.5px]">
          <Fit w={44}>10:55</Fit>
          <Fit w={94}>06/12/2024</Fit>
        </div>
      </div>
    </div>
  );
}

export default function App() {
  return (
    <div className="h-[1600px] w-[2560px] overflow-hidden bg-white">
      <Browser />
      <Page />
      <Taskbar />
    </div>
  );
}
